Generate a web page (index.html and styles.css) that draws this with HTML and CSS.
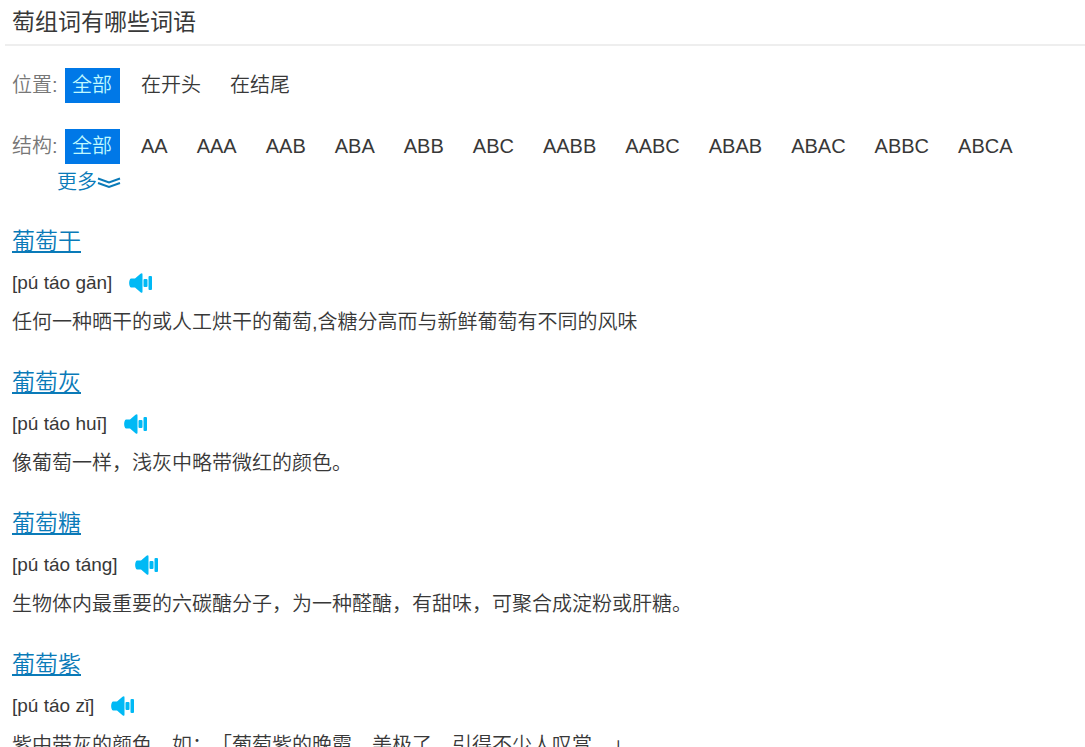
FILE: index.html
```html
<!DOCTYPE html>
<html lang="zh-CN">
<head>
    <meta charset="UTF-8">
    <meta name="viewport" content="width=device-width, initial-scale=1.0">
    <title>萄组词有哪些词语</title>
    <link rel="stylesheet" href="styles.css">
</head>
<body>
    <!-- speaker icon shared by all words -->
    <svg class="icons" width="0" height="0" aria-hidden="true">
        <symbol id="speaker" viewBox="0 0 24 20">
            <path d="M2 5.5H6L11.5 .8Q13.5 -.5 13.5 1.5V18.5Q13.5 20.5 11.5 19.2L6 14.5H2Q1 14.5 .5 12.5Q-.2 10 .5 7.5Q1 5.5 2 5.5Z"/>
            <rect x="14.5" y="6" width="4" height="8" rx="1"/>
            <rect x="19.5" y="3" width="3.5" height="14" rx="1"/>
        </symbol>
    </svg>

    <h1 class="title">萄组词有哪些词语</h1>

    <main class="content">
        <div class="filter">
            <span class="filter-label">位置:</span>
            <div class="filter-list">
                <a href="#" class="active">全部</a>
                <a href="#">在开头</a>
                <a href="#">在结尾</a>
            </div>
        </div>
        <div class="filter">
            <span class="filter-label">结构:</span>
            <div class="filter-list">
                <a href="#" class="active">全部</a>
                <a href="#">AA</a>
                <a href="#">AAA</a>
                <a href="#">AAB</a>
                <a href="#">ABA</a>
                <a href="#">ABB</a>
                <a href="#">ABC</a>
                <a href="#">AABB</a>
                <a href="#">AABC</a>
                <a href="#">ABAB</a>
                <a href="#">ABAC</a>
                <a href="#">ABBC</a>
                <a href="#">ABCA</a>
            </div>
        </div>
        <a href="#" class="more">更多<svg class="chevrons" viewBox="0 0 24 12" aria-hidden="true"><path d="M1 1.5L12 5.5L23 1.5M1 6L12 10L23 6"/></svg></a>

        <article class="word">
            <h2><a href="#">葡萄干</a></h2>
            <div class="pinyin">[pú táo gān]<button type="button" class="play" aria-label="播放"><svg><use href="#speaker"/></svg></button></div>
            <p>任何一种晒干的或人工烘干的葡萄,含糖分高而与新鲜葡萄有不同的风味</p>
        </article>
        <article class="word">
            <h2><a href="#">葡萄灰</a></h2>
            <div class="pinyin">[pú táo huī]<button type="button" class="play" aria-label="播放"><svg><use href="#speaker"/></svg></button></div>
            <p>像葡萄一样，浅灰中略带微红的颜色。</p>
        </article>
        <article class="word">
            <h2><a href="#">葡萄糖</a></h2>
            <div class="pinyin">[pú táo táng]<button type="button" class="play" aria-label="播放"><svg><use href="#speaker"/></svg></button></div>
            <p>生物体内最重要的六碳醣分子，为一种醛醣，有甜味，可聚合成淀粉或肝糖。</p>
        </article>
        <article class="word">
            <h2><a href="#">葡萄紫</a></h2>
            <div class="pinyin">[pú táo zǐ]<button type="button" class="play" aria-label="播放"><svg><use href="#speaker"/></svg></button></div>
            <p>紫中带灰的颜色。如：「葡萄紫的晚霞，美极了，引得不少人叹赏。」</p>
        </article>
    </main>
</body>
</html>
```

FILE: styles.css
```css
* {
    padding: 0;
    margin: 0;
    box-sizing: border-box;
}

:root {
    --text-color: #383838;
    --label-color: #777;
    --link-color: #0a7ab8;
    --active-color: #0078e7;
    --icon-color: #00b9f5;
}

html {
    overflow: hidden;
}

body {
    background: #fff;
    color: var(--text-color);
    font-family: "Liberation Sans", "Noto Sans CJK SC", sans-serif;
    font-size: 20px;
    font-weight: 350;
    line-height: 35px;
    text-spacing-trim: space-all;
}

a {
    color: inherit;
    text-decoration: none;
}

.icons {
    position: absolute;
}

.title {
    margin-left: 5px;
    padding: 0 7px;
    border-bottom: 2px solid #eee;
    font-size: 23px;
    font-weight: 400;
    line-height: 44px;
}

.content {
    padding: 22px 12px 0;
}

.filter {
    display: flex;
    margin-bottom: 26px;
}

.filter-label {
    flex: none;
    width: 53px;
    color: var(--label-color);
}

.filter-list {
    display: flex;
    flex-wrap: wrap;
    gap: 0 14px;
}

.filter-list a {
    padding: 0 8px 0 7px;
}

.filter-list .active {
    background: var(--active-color);
    color: #bff8ff;
}

.more {
    display: flex;
    align-items: center;
    width: max-content;
    margin: -25px 0 22px 45px;
    color: var(--link-color);
}

.chevrons {
    width: 24px;
    height: 12px;
    fill: none;
    stroke: var(--link-color);
    stroke-width: 2;
}

.word {
    margin-bottom: 23px;
}

.word h2 {
    font-size: 23px;
    font-weight: 350;
    line-height: 38px;
}

.word h2 a {
    color: var(--link-color);
    text-decoration: underline;
    text-decoration-thickness: 2px;
    text-underline-offset: 2px;
}

.pinyin {
    display: flex;
    align-items: center;
    gap: 17px;
    font-size: 19px;
    line-height: 45px;
}

.play {
    display: flex;
    border: none;
    background: none;
    cursor: pointer;
}

.play svg {
    width: 24px;
    height: 20px;
    fill: var(--icon-color);
}
```
